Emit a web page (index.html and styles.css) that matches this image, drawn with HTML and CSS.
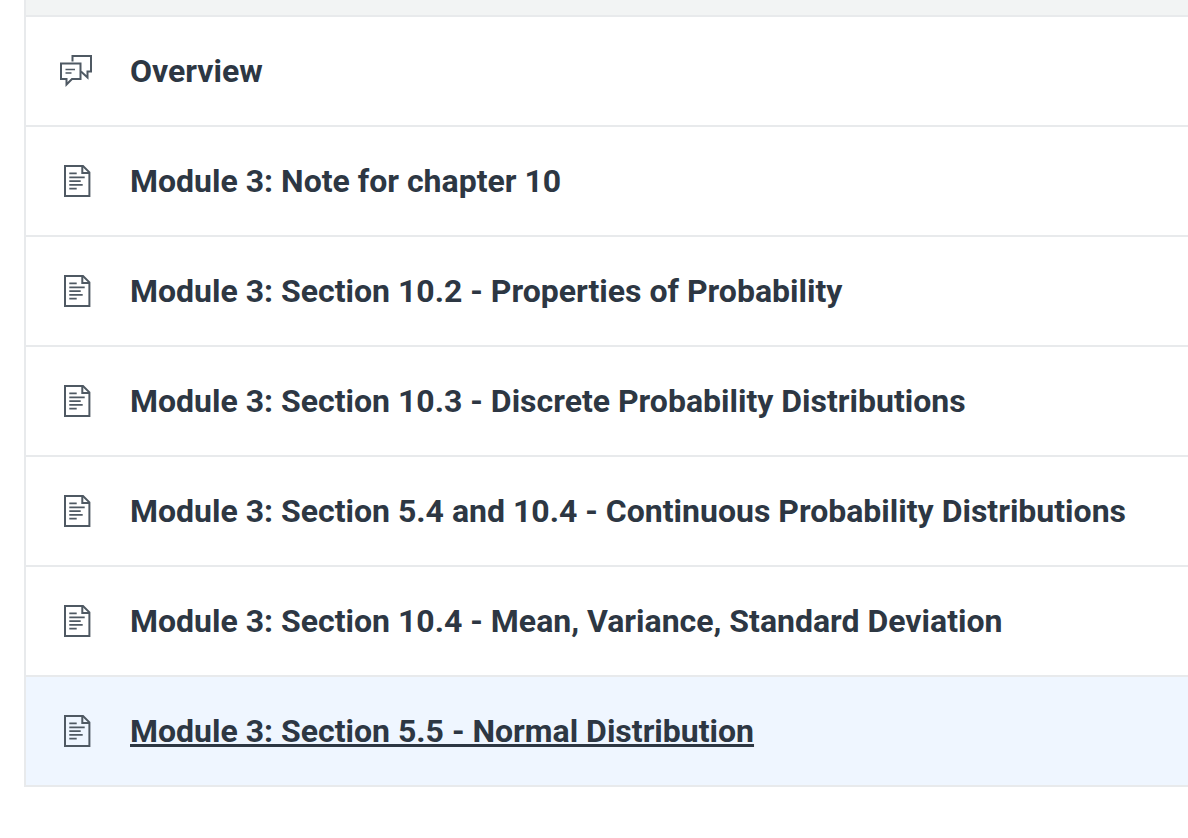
FILE: index.html
```html
<!DOCTYPE html>
<html lang="en">
<head>
    <meta charset="UTF-8">
    <meta name="viewport" content="width=device-width, initial-scale=1.0">
    <title>Module 3</title>
    <link rel="stylesheet" href="styles.css">
</head>
<body>
    <!-- Shared icon shapes -->
    <svg class="sprite" aria-hidden="true">
        <symbol id="icon-discussion" viewBox="0 0 36 36">
            <path d="M14.5 8.5V3H33v15.5h-3.5v6l-6.5-6"/>
            <path d="M3 10.5h19.5V26H14l-5.5 5.5V26H3z"/>
            <path d="M7.5 16.5h9.5M7.5 20h6" stroke-width="1.7"/>
        </symbol>
        <symbol id="icon-page" viewBox="0 0 36 36">
            <path d="M7 3h18l6.4 6.4V33H7z"/>
            <path d="M24.3 3v7h7"/>
            <path d="M11.3 10.4h7.4M11.3 14.3h15.4M11.3 18.1h11.4M11.3 21.8h13.4M11.3 25.7h7.4" stroke-width="1.7"/>
        </symbol>
    </svg>

    <main class="module">
        <div class="module-header"></div>
        <ul class="module-items">
            <li class="item">
                <svg class="icon" aria-hidden="true"><use href="#icon-discussion"/></svg>
                <a class="item-link" href="#">Overview</a>
            </li>
            <li class="item">
                <svg class="icon" aria-hidden="true"><use href="#icon-page"/></svg>
                <a class="item-link" href="#">Module 3: Note for chapter 10</a>
            </li>
            <li class="item">
                <svg class="icon" aria-hidden="true"><use href="#icon-page"/></svg>
                <a class="item-link" href="#">Module 3: Section 10.2 - Properties of Probability</a>
            </li>
            <li class="item">
                <svg class="icon" aria-hidden="true"><use href="#icon-page"/></svg>
                <a class="item-link" href="#">Module 3: Section 10.3 - Discrete Probability Distributions</a>
            </li>
            <li class="item">
                <svg class="icon" aria-hidden="true"><use href="#icon-page"/></svg>
                <a class="item-link" href="#">Module 3: Section 5.4 and 10.4 - Continuous Probability Distributions</a>
            </li>
            <li class="item">
                <svg class="icon" aria-hidden="true"><use href="#icon-page"/></svg>
                <a class="item-link" href="#">Module 3: Section 10.4 - Mean, Variance, Standard Deviation</a>
            </li>
            <li class="item active">
                <svg class="icon" aria-hidden="true"><use href="#icon-page"/></svg>
                <a class="item-link" href="#">Module 3: Section 5.5 - Normal Distribution</a>
            </li>
        </ul>
    </main>
</body>
</html>
```

FILE: styles.css
```css
* {
    margin: 0;
    padding: 0;
    box-sizing: border-box;
}

body {
    background-color: #fff;
    color: #2d3b45;
    font-family: Roboto, "Liberation Sans", sans-serif;
    font-size: 32px;
    line-height: 40px;
}

.sprite {
    display: none;
}

.module {
    margin-left: 24px;
    border-left: 2px solid #e8eaec;
    border-bottom: 2px solid #e8eaec;
}

.module-header {
    height: 15px;
    background-color: #f2f4f4;
}

.module-items {
    list-style: none;
}

.item {
    display: flex;
    align-items: center;
    gap: 36px;
    padding: 34px 32px;
    border-top: 2px solid #e8eaec;
}

.item.active {
    background-color: #eff6ff;
}

.icon {
    flex: none;
    width: 36px;
    height: 36px;
    fill: none;
    stroke: #4f5963;
    stroke-width: 2;
}

.item-link {
    color: #2d3743;
    font-weight: 700;
    text-decoration: none;
}

.item-link:hover,
.item.active .item-link {
    text-decoration: underline;
    text-decoration-thickness: 3px;
}
```
